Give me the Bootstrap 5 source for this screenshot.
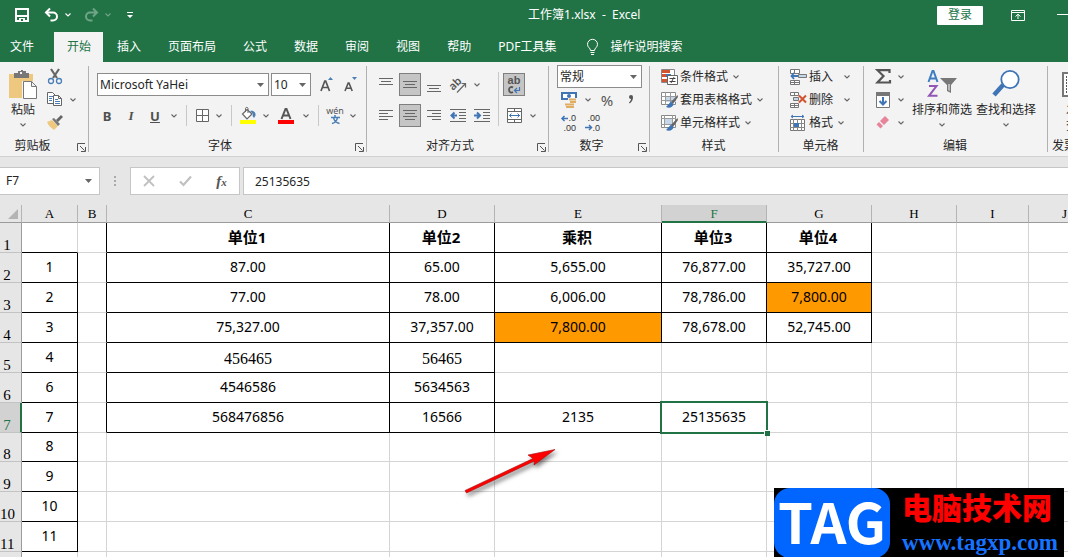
<!DOCTYPE html>
<html lang="zh-CN">
<head>
<meta charset="utf-8">
<meta name="viewport" content="width=device-width, initial-scale=1">
<title>工作簿1.xlsx - Excel</title>
<link href="https://cdn.jsdelivr.net/npm/bootstrap@5.3.0/dist/css/bootstrap.min.css" rel="stylesheet">
<style>
:root{--xl:#217346;--ui:"Noto Sans","Noto Sans CJK SC",sans-serif}
body{font-family:var(--ui);font-size:12px;line-height:16px;color:#262626;background:#fff}
button{font:inherit;color:inherit;background:none;border:0;padding:0}
svg{display:block;flex:none;overflow:visible}
.cv{color:#666}
.titlebar{height:32px;background:var(--xl);color:#fff;padding:0 0 2px 15px}
.titlebar .cv{color:#fff}
.titlebar .quick{flex:6 1 0;gap:3px}
.titlebar .winctl{flex:5 1 0}
.quick button{width:14px;height:16px;display:flex;align-items:center;justify-content:center}
.quick .undo{margin-left:12px}
.quick .wait{opacity:.35}
.quick .redo{margin-left:6px}
.quick .more{margin-left:5px}
.doc-name{white-space:pre}
.login{width:46px;height:19px;background:#fff;color:var(--xl);border-radius:1px}
.tabs{height:30px;background:var(--xl);gap:1px;white-space:nowrap}
.tabs a{color:#fff;text-decoration:none;padding:0 13px;height:30px;display:flex;align-items:center}
.tabs a.first{padding:0 19px 0 10px}
.tabs a.on{background:#f3f3f3;color:var(--xl);padding:0 12px 0 13px}
.ribbon{height:95px;background:#f3f3f3;border-bottom:1px solid #d2d2d2;overflow:hidden}
.grp{flex:none;position:relative;padding-top:3px}
.grp::after{content:"";position:absolute;right:0;top:4px;bottom:4px;width:1px;background:#b1b1b1}
.grp-main{height:69px;display:flex}
.grp-name{height:22px;text-align:center;line-height:24px;padding-right:16px}
.grp-name.mid{padding-right:2px}
.launch{position:absolute;right:3px;bottom:4px;width:9px;height:9px}
.w-clip{width:89px}.w-font{width:278px}.w-align{width:182px}.w-num{width:101px}
.w-style{width:129px}.w-cell{width:85px}.w-edit{width:184px}.w-inv{width:90px}
.w-align .grp-main{padding-left:7px}
.w-style .grp-main,.w-cell .grp-main{padding-left:11px}
.w-inv .grp-main{padding-left:14px}
.tall{display:flex;flex-direction:column;align-items:center;white-space:nowrap}
.tall svg:first-child{margin:4px 0 2px}
.tall .cv{margin-top:5px}
.line{height:23px;display:flex;align-items:center;white-space:nowrap}
.two{padding-top:8px;display:flex;flex-direction:column;gap:8px}
.style-line{padding-left:6px}
.ic{height:23px;width:24px;display:flex;align-items:center;justify-content:center;flex:none}
.ic.s{width:20px}.ic.m{width:22px}.ic.l{width:26px}.ic.c{width:14px}
.ic.down{width:22px;margin:0 1px;background:#c5c5c5;border:1px solid #7f7f7f}
.vsep{width:1px;height:21px;background:#c8c8c8;margin:0 5px;flex:none}
.vsep.long{height:54px;margin:7px 3px 0 4px}
.pick{appearance:none;border:1px solid #8c8c8c;border-radius:0;background:#fff url("data:image/svg+xml,%3Csvg xmlns='http://www.w3.org/2000/svg' width='7' height='4'%3E%3Cpath d='M0 0h7L3.500 4z' fill='%23666'/%3E%3C/svg%3E") no-repeat right 4px center;height:23px;padding:0 2px;color:#262626;font:12px/16px var(--ui)}
.pick.face{width:172px}.pick.size{width:40px;margin-left:2px}.pick.kind{width:85px}
.cmd{display:flex;align-items:center;height:23px;gap:2px}
.cmd .cv{margin-left:3px}
.cmd .cv.far{margin-left:9px}
.glyph{font-weight:700;font-size:13px;color:#505050}
.slant{font-family:"Liberation Serif",serif;font-style:italic}
.pct{font-size:15px;color:#555}
.mini{font:9px "Liberation Sans",sans-serif;fill:#333}
.wrap-ab{font:700 11px "Liberation Sans",sans-serif;fill:#555}
.fx{background:#e6e6e6;height:48px;padding-top:10px}
.fx>*{height:28px}
.fx .pick{width:100px;height:28px;border-color:#c6c6c6;border-left:0;padding-left:6px;background-position:right 7px center}
.dots{width:30px}
.fx-tools{width:110px;background:#fff;border:1px solid #c6c6c6;margin-right:3px;gap:24px}
.fx-fn{font:italic 700 15px/20px "Liberation Serif",serif;color:#555}
.fx-fn span{font-size:11px}
.fx input{border:1px solid #c6c6c6;border-right:0;padding:0 11px;font:12px/16px var(--ui);color:#262626;min-width:0;border-radius:0}
.pane{min-height:0;overflow:hidden;position:relative}
.sheet{table-layout:fixed;width:1101px;border-collapse:separate;border-spacing:0;color:#000;font-size:14px;line-height:18px}
.sheet th,.sheet td{padding:0;text-align:center;vertical-align:middle;overflow:visible}
.sheet td{padding-bottom:2px}
.sheet thead th{height:18px;background:#e6e6e6;border-bottom:1px solid #9b9b9b;border-right:1px solid #b4b4b4;font:13px/16px "Liberation Serif",serif}
.sheet thead th.cur{background:#d2d2d2;border-bottom:2px solid var(--xl);color:var(--xl);line-height:15px}
.sheet tbody th{background:#e6e6e6;border-right:1px solid #9b9b9b;border-bottom:1px solid #c3c3c3;font:15px/13px "Liberation Serif",serif;vertical-align:bottom;padding-right:7px}
.sheet tbody th.cur{background:#d2d2d2;border-right:2px solid var(--xl);color:var(--xl);padding-right:6px}
.sheet tbody tr{height:30px}
.sheet tbody tr.low{height:29px}
.sheet td{border-right:1px solid #d4d4d4;border-bottom:1px solid #d4d4d4}
.sheet .head td{font-weight:700;font-size:15px;padding-right:2px}
.sheet tbody td.hot{background:#f90}
.sheet .seq td:nth-child(2){border-right-color:#000}
.sheet .seq td:nth-child(2),.sheet .head td:nth-child(2),
.sheet .full td:nth-child(n+4):nth-child(-n+8),
.sheet .part td:nth-child(n+4):nth-child(-n+5),.sheet .part td.edge{border-bottom-color:#000}
.sheet .full td:nth-child(n+3):nth-child(-n+8),
.sheet .part td:nth-child(n+3):nth-child(-n+5){border-right-color:#000}
.sheet .song td:nth-child(n+4){font:16px/18px "Liberation Serif",serif;padding:2px 0 0}
.sheet td.sel{position:relative}
.sel::before{content:"";position:absolute;inset:-2px;border:2px solid var(--xl)}
.sel::after{content:"";position:absolute;right:-4px;bottom:-4px;width:6px;height:6px;background:var(--xl);border:solid #fff;border-width:1px 0 0 1px}
.pointer{position:absolute;left:460px;top:240px;filter:drop-shadow(2px 3px 2px rgba(0,0,0,.5))}
.stamp{position:absolute;right:4px;bottom:0;width:290px;height:69px;background:#000;overflow:hidden}
.stamp-tag{width:116px;height:70px;background:#06f;color:#fff;border-radius:16px;font:700 56px/64px "Noto Sans CJK SC",sans-serif;text-align:center;flex:none}
.stamp-name{color:#f00;font:900 30px/36px "Noto Sans CJK SC",sans-serif}
.stamp-url{color:#1673ff;font:700 23px/26px "Liberation Serif",serif;margin-top:6px}
</style>
</head>
<body class="vh-100 d-flex flex-column overflow-hidden">
<svg width="0" height="0" class="position-absolute" aria-hidden="true">
  <defs>
    <symbol id="cv" viewBox="0 0 6 4"><path d="M.5.5 3 3 5.500.5" fill="none" stroke="currentColor" stroke-width="1.100"/></symbol>
    <symbol id="ln" viewBox="0 0 9 9"><path d="M.5 8V.5H8M3 3l4.500 4.500M8.500 4v4.500H4" fill="none" stroke="#555"/></symbol>
  </defs>
</svg>

<header class="titlebar d-flex align-items-center flex-shrink-0">
  <div class="quick d-flex align-items-center">
    <button aria-label="保存"><svg width="14" height="14"><path d="M1 1h12v12H1z" fill="none" stroke="#fff" stroke-width="2"/><path d="M2 7h10v2H2zM4 10h6v4H4z" fill="#fff"/><path d="M6 11h2v2H6z" fill="#217346"/></svg></button>
    <button class="undo" aria-label="撤消"><svg width="15" height="14"><path d="M2 4.500h7a4 4 0 0 1 0 8H6.500" fill="none" stroke="#fff" stroke-width="2"/><path d="M6 .5 2 4.500l4 4" fill="none" stroke="#fff" stroke-width="2"/></svg></button>
    <button aria-label="撤消列表"><svg class="cv" width="6" height="4"><use href="#cv"/></svg></button>
    <button class="wait redo" aria-label="恢复"><svg width="15" height="14"><path d="M13 4.500H6a4 4 0 0 0 0 8h2.500M9 .5l4 4-4 4" fill="none" stroke="#fff" stroke-width="2"/></svg></button>
    <button class="wait" aria-label="恢复列表"><svg class="cv" width="6" height="4"><use href="#cv"/></svg></button>
    <button class="more" aria-label="自定义"><svg width="6" height="6"><path d="M0 0h6v1H0zM0 3h6L3 6z" fill="#fff"/></svg></button>
  </div>
  <span class="doc-name">工作簿1.xlsx  -  Excel</span>
  <div class="winctl d-flex align-items-center justify-content-end">
    <button class="login me-4">登录</button>
    <button class="ms-1" aria-label="功能区显示选项"><svg width="14" height="11"><path d="M.5.5h13v10H.5zM.5 2.500h13M7 9V4.500M4.500 6.500 7 4.200l2.500 2.300" fill="none" stroke="#fff"/></svg></button>
    <button class="ms-4 ps-2" aria-label="最小化"><svg width="11" height="2"><path d="M0 0h11v1H0z" fill="#fff"/></svg></button>
  </div>
</header>

<nav class="tabs d-flex flex-shrink-0">
  <a href="#" class="first">文件</a><a href="#" class="on">开始</a><a href="#">插入</a><a href="#">页面布局</a><a href="#">公式</a><a href="#">数据</a><a href="#">审阅</a><a href="#">视图</a><a href="#">帮助</a><a href="#">PDF工具集</a>
  <a href="#"><svg width="11" height="16" class="me-2 ms-1"><path d="M3.500 11.500C3.500 9 .5 8.500.5 5.300a5 5 0 0 1 10 0c0 3.200-3 3.700-3 6.200zM3.500 13.500h4M4 15.500h3" fill="none" stroke="#fff"/></svg><span class="ps-1">操作说明搜索</span></a>
</nav>

<section class="ribbon d-flex flex-shrink-0">
  <div class="grp w-clip">
    <div class="grp-main ps-2">
      <button class="tall">
        <svg width="30" height="31" viewBox="0 0 30 31"><path d="M1 5h24v24H1z" fill="#edc87e"/><path d="M6 9V4h4V2h3v-1h2v1h3v2h3v5z" fill="#777"/><path d="M12 3h2v2h-2z" fill="#f3f3f3"/><path d="M14 12h10l5 5v13H14z" fill="#f3f3f3"/><path d="M15.500 12.500h8l5 5v12h-13zM23.500 12.500v5h5" fill="#fff" stroke="#777"/></svg>
        粘贴<svg class="cv" width="6" height="4"><use href="#cv"/></svg>
      </button>
      <div class="ms-1 pe-1">
        <div class="line ps-1"><button class="ic s m-0" aria-label="剪切"><svg width="16" height="16"><path d="M3 0l6 9M11 0L5 9" stroke="#666" stroke-width="2.200"/><circle cx="3" cy="12" r="2.500" fill="none" stroke="#4a7fb5" stroke-width="1.300"/><circle cx="11" cy="12" r="2.500" fill="none" stroke="#4a7fb5" stroke-width="1.300"/></svg></button></div>
        <div class="line ps-1"><button class="ic s" aria-label="复制"><svg width="18" height="15"><path d="M.5.5h5l3 3v8h-8z" fill="#fff" stroke="#666"/><path d="M2 4.500h4M2 6.500h3M2 8.500h3" stroke="#4a7fb5"/><path d="M6.500 3.500h5l3 3v7h-8zM11.500 3.500v3h3" fill="#fff" stroke="#666"/><path d="M8 7.500h3M8 9.500h5M8 11.500h5" stroke="#4a7fb5"/></svg></button><button class="ic c" aria-label="复制选项"><svg class="cv" width="6" height="4"><use href="#cv"/></svg></button></div>
        <div class="line ps-1"><button class="ic s" aria-label="格式刷"><svg width="18" height="15"><path d="M0 7l5-2 6 6-4 4C4 13 1 10 0 7z" fill="#edc87e"/><path d="M5 4l2-1 6 6-2 2z" fill="#777"/><path d="M9 5l5-5 2 2-5 5z" fill="#666"/></svg></button></div>
      </div>
    </div>
    <div class="grp-name pe-4">剪贴板</div><button class="launch" aria-label="剪贴板设置"><svg width="9" height="9"><use href="#ln"/></svg></button>
  </div>

  <div class="grp w-font">
    <div class="grp-main">
      <div class="two">
        <div class="line ps-2">
          <select class="pick face" aria-label="字体"><option>Microsoft YaHei</option></select>
          <select class="pick size" aria-label="字号"><option>10</option></select>
          <button class="ic ms-1" aria-label="增大字号"><svg width="14" height="16" viewBox="0 0 14 16"><path d="M1 14 4.800 4h.900L9.500 14M2.500 10.500H8" fill="none" stroke="#555" stroke-width="1.700"/><path d="M8 3h5L10.500 0z" fill="#4a7fb5"/></svg></button>
          <button class="ic" aria-label="减小字号"><svg width="14" height="16" viewBox="0 0 14 16"><path d="M1 14 4.200 6H5l3.200 8M2.300 11.300H7" fill="none" stroke="#555" stroke-width="1.600"/><path d="M8 0h5l-2.500 3z" fill="#4a7fb5"/></svg></button>
        </div>
        <div class="line style-line">
          <button class="ic glyph">B</button><button class="ic glyph slant">I</button><button class="ic glyph text-decoration-underline">U</button><button class="ic c" aria-label="下划线选项"><svg class="cv" width="6" height="4"><use href="#cv"/></svg></button>
          <span class="vsep"></span>
          <button class="ic s" aria-label="边框"><svg width="13" height="13"><path d="M.5.5h12v12H.5zM6.500 0v13M0 6.500h13" fill="#fff" stroke="#666"/></svg></button><button class="ic c" aria-label="边框选项"><svg class="cv" width="6" height="4"><use href="#cv"/></svg></button>
          <span class="vsep"></span>
          <button class="ic m" aria-label="填充颜色"><svg width="16" height="17"><path d="M7 2.500 12 7l-5 5-4.500-5z" fill="#fff" stroke="#666" stroke-width="1.200"/><path d="M5.500 5V1.500c0-1.500 2.500-1.500 2.500 0V6" fill="none" stroke="#666"/><path d="M10 4c4-1 6 2 5.500 4.500L14 11l-1.500-2 .5-2z" fill="#4a7fb5"/><path d="M0 13h16v4H0z" fill="#ff0"/></svg></button><button class="ic c" aria-label="填充选项"><svg class="cv" width="6" height="4"><use href="#cv"/></svg></button>
          <button class="ic l" aria-label="字体颜色"><svg width="16" height="16"><path d="M3.500 11 7.500 1h1l4 10M5 7.500h6" fill="none" stroke="#555" stroke-width="2"/><path d="M0 12h16v4H0z" fill="red"/></svg></button><button class="ic c" aria-label="颜色选项"><svg class="cv" width="6" height="4"><use href="#cv"/></svg></button>
          <span class="vsep"></span>
          <button class="ic m" aria-label="拼音"><svg width="17" height="17"><text x="8" y="7" text-anchor="middle" font-size="9" font-family="Noto Sans" fill="#555">wén</text><path d="M8 8v2M4 10.500h9M5 16.500c4-1 5-3 5.500-6M12.500 16.500c-4-1-5.500-3-6-6" fill="none" stroke="#4a7fb5" stroke-width="1.500"/></svg></button><button class="ic c" aria-label="拼音选项"><svg class="cv" width="6" height="4"><use href="#cv"/></svg></button>
        </div>
      </div>
    </div>
    <div class="grp-name">字体</div><button class="launch" aria-label="字体设置"><svg width="9" height="9"><use href="#ln"/></svg></button>
  </div>

  <div class="grp w-align">
    <div class="grp-main">
      <div class="two">
        <div class="line">
          <button class="ic" aria-label="顶端对齐"><svg width="14" height="16"><path d="M0 1.500h14M2 4.500h10M0 7.500h14" stroke="#666"/></svg></button><button class="ic down" aria-label="垂直居中"><svg width="14" height="16"><path d="M0 4.500h14M2 7.500h10M0 10.500h14" stroke="#666"/></svg></button><button class="ic" aria-label="底端对齐"><svg width="14" height="16"><path d="M0 8.500h14M2 11.500h10M0 14.500h14" stroke="#666"/></svg></button><button class="ic" aria-label="方向"><svg width="17" height="16"><text x="0" y="11" font-size="11" font-weight="600" font-family="Noto Sans" fill="#555" transform="rotate(-45 5 9)">ab</text><path d="M7 15.500 15 7M11.500 6.500h4v4" fill="none" stroke="#666" stroke-width="1.200"/></svg></button><button class="ic c" aria-label="方向选项"><svg class="cv" width="6" height="4"><use href="#cv"/></svg></button>
        </div>
        <div class="line">
          <button class="ic" aria-label="左对齐"><svg width="14" height="12"><path d="M0 .5h14M0 3.500h9M0 6.500h14M0 9.500h9" stroke="#666"/></svg></button><button class="ic down" aria-label="居中"><svg width="14" height="12"><path d="M0 .5h14M2 3.500h10M0 6.500h14M2 9.500h10" stroke="#666"/></svg></button><button class="ic" aria-label="右对齐"><svg width="14" height="12"><path d="M0 .5h14M5 3.500h9M0 6.500h14M5 9.500h9" stroke="#666"/></svg></button><button class="ic" aria-label="减少缩进"><svg width="16" height="13"><path d="M0 .5h16M9 3.500h7M9 6.500h7M9 9.500h7M0 12.500h16" stroke="#666"/><path d="M7 6.500H2M4.500 3.500l-3 3 3 3" fill="none" stroke="#3f74b5" stroke-width="2"/></svg></button><button class="ic" aria-label="增加缩进"><svg width="16" height="13"><path d="M0 .5h16M9 3.500h7M9 6.500h7M9 9.500h7M0 12.500h16" stroke="#666"/><path d="M0 6.500h5M3 3.500l3 3-3 3" fill="none" stroke="#3f74b5" stroke-width="2"/></svg></button>
        </div>
      </div>
      <span class="vsep long"></span>
      <div class="two">
        <div class="line"><button class="ic down" aria-label="自动换行"><svg width="16" height="20"><text class="wrap-ab" x="8" y="9" text-anchor="middle">ab</text><path d="M7 12.500c-1.500-1-4-.5-4 2.300s2.500 3.300 4 2.300" fill="none" stroke="#555" stroke-width="1.800"/><path d="M13.500 12v3.500H9M11 13l-2.500 2.500L11 18" fill="none" stroke="#3f74b5" stroke-width="1.200"/></svg></button></div>
        <div class="line"><button class="ic" aria-label="合并后居中"><svg width="15" height="15"><path d="M.5.5h14v14H.5z" fill="#fff" stroke="#666"/><path d="M0 3.500h15M0 11.500h15M7.500 0v3.500M7.500 12v3" stroke="#666"/><path d="M2 7.500h11M4.500 5.500l-2 2 2 2M10.500 5.500l2 2-2 2" fill="none" stroke="#3f74b5"/></svg></button><button class="ic c" aria-label="合并选项"><svg class="cv" width="6" height="4"><use href="#cv"/></svg></button></div>
      </div>
    </div>
    <div class="grp-name">对齐方式</div><button class="launch" aria-label="对齐设置"><svg width="9" height="9"><use href="#ln"/></svg></button>
  </div>

  <div class="grp w-num">
    <div class="grp-main flex-column ps-2">
      <select class="pick kind" aria-label="数字格式"><option>常规</option></select>
      <div class="line"><button class="ic" aria-label="会计格式"><svg width="17" height="17"><path d="M1 2h14v6H1z" fill="#fff" stroke="#3f74b5" stroke-width="2"/><circle cx="8" cy="5" r="2" fill="#3f74b5"/><path d="M7 7h9v9H7z" fill="#f3f3f3"/><path d="M8 8.500h7M9 11h6M4 13.500h9M5 16h8" stroke="#e0ae62" stroke-width="1.800"/></svg></button><button class="ic c" aria-label="会计选项"><svg class="cv" width="6" height="4"><use href="#cv"/></svg></button><button class="ic pct">%</button><button class="ic" aria-label="千位分隔"><svg width="6" height="9"><path d="M1 2a2 2 0 0 1 4 0c0 3-1 5-3.500 6.500l-.5-1C2.500 6 3 5 3 4 2 4 1 3 1 2z" fill="#555"/></svg></button></div>
      <div class="line"><button class="ic" aria-label="增加小数位"><svg width="16" height="15"><text class="mini" x="15" y="6" text-anchor="end">.0</text><text class="mini" x="15" y="16" text-anchor="end">.00</text><path d="M7 3.500H1M3.500 1 1 3.500 3.500 6" fill="none" stroke="#3f74b5" stroke-width="1.500"/></svg></button><button class="ic" aria-label="减少小数位"><svg width="16" height="15"><text class="mini" x="15" y="6" text-anchor="end">.00</text><text class="mini" x="15" y="16" text-anchor="end">.0</text><path d="M0 12.500h6M4 10l2.500 2.500L4 15" fill="none" stroke="#3f74b5" stroke-width="1.500"/></svg></button></div>
    </div>
    <div class="grp-name">数字</div><button class="launch" aria-label="数字设置"><svg width="9" height="9"><use href="#ln"/></svg></button>
  </div>

  <div class="grp w-style">
    <div class="grp-main flex-column">
      <button class="cmd"><svg width="17" height="16"><path d="M.5.5h13v13H.5z" fill="#fff" stroke="#888"/><path d="M1 1h8v3H1zM1 10h5v3H1z" fill="#d35230"/><path d="M1 5h4v3H1z" fill="#d35230"/><path d="M5 5h5v3H5z" fill="#3f74b5"/><path d="M6.500 6.500h10v9h-10z" fill="#fff" stroke="#666"/><path d="M8.500 9.500h6M8.500 12.500h6M13 8l-3 6" stroke="#444"/></svg>条件格式<svg class="cv" width="6" height="4"><use href="#cv"/></svg></button>
      <button class="cmd"><svg width="17" height="16"><path d="M.5.5h14v12H.5z" fill="#fff" stroke="#888"/><path d="M5 4h10v6H5z" fill="#c7d7ea"/><path d="M0 4.500h15M0 8.500h15M4.500 0v13M9.500 0v13" stroke="#999"/><path d="M16.500 3 10 10l2 2 5-7z" fill="#666"/><path d="M10 9.500 5 15c3 1.500 7 .5 7.500-3z" fill="#3f74b5"/></svg>套用表格格式<svg class="cv" width="6" height="4"><use href="#cv"/></svg></button>
      <button class="cmd"><svg width="17" height="16"><path d="M.5.5h14v12H.5z" fill="#fff" stroke="#888"/><path d="M3 3h9v7H3z" fill="#c7d7ea"/><path d="M0 3.500h15M0 9.500h15M3.500 0v13M11.500 0v13" stroke="#999"/><path d="M16.500 3 10 10l2 2 5-7z" fill="#666"/><path d="M10 9.500 5 15c3 1.500 7 .5 7.500-3z" fill="#3f74b5"/></svg>单元格样式<svg class="cv" width="6" height="4"><use href="#cv"/></svg></button>
    </div>
    <div class="grp-name mid">样式</div>
  </div>

  <div class="grp w-cell">
    <div class="grp-main flex-column">
      <button class="cmd"><svg width="17" height="16"><path d="M.5.5h9v4h-9zM4.500.5v4M.5 11.500h9v4h-9zM4.500 11.500v4M.5 13.500h9" fill="#fff" stroke="#777"/><path d="M8.500 5.500h8v3h-8z" fill="#c7d7ea" stroke="#777"/><path d="M8 7H1.500M4 4 1.500 7 4 10" fill="none" stroke="#3f74b5" stroke-width="1.800"/></svg>插入<svg class="cv far" width="6" height="4"><use href="#cv"/></svg></button>
      <button class="cmd"><svg width="17" height="16"><path d="M.5.5h8v3h-8zM4.500.5v3M.5 11.500h8v4h-8zM4.500 11.500v4M.5 13.500h8" fill="#fff" stroke="#777"/><path d="M3.500 5.500h5v3h-5z" fill="#c7d7ea" stroke="#777"/><path d="M9 3.500l7 7M16 3.500l-7 7" stroke="#d35230" stroke-width="2"/></svg>删除<svg class="cv far" width="6" height="4"><use href="#cv"/></svg></button>
      <button class="cmd"><svg width="17" height="16"><path d="M1 1.500h13M3 0 1 1.500 3 3M12 0l2 1.500L12 3" fill="none" stroke="#3f74b5"/><path d="M.5 4.500h14v11H.5z" fill="#fff" stroke="#777"/><path d="M0 8.500h15M0 12.500h15M3.500 4v12M7.500 4v12M11.500 4v12" stroke="#888"/><path d="M4 8h5v4H4z" fill="#3f74b5"/></svg>格式<svg class="cv" width="6" height="4"><use href="#cv"/></svg></button>
    </div>
    <div class="grp-name mid">单元格</div>
  </div>

  <div class="grp w-edit">
    <div class="grp-main ps-2">
      <div class="me-1">
        <div class="line"><button class="ic m" aria-label="求和"><svg width="16" height="15"><path d="M14.500 4V1.200H2.500L8.500 7l-6 6.500h12.500V11" fill="none" stroke="#555" stroke-width="2.200"/></svg></button><button class="ic c" aria-label="求和选项"><svg class="cv" width="6" height="4"><use href="#cv"/></svg></button></div>
        <div class="line"><button class="ic m" aria-label="填充"><svg width="14" height="16"><path d="M.5.5h13v15H.5z" fill="#fff" stroke="#777"/><path d="M0 0h14v4H0z" fill="#777"/><path d="M7 5v7M3.500 9 7 12.500 10.500 9" fill="none" stroke="#3f74b5" stroke-width="2"/></svg></button><button class="ic c" aria-label="填充选项"><svg class="cv" width="6" height="4"><use href="#cv"/></svg></button></div>
        <div class="line"><button class="ic m" aria-label="清除"><svg width="14" height="13"><path d="M9 0l4 4-5 5-4-4z" fill="#e8849a"/><path d="M3 6l4 4-2.500 2.500L.5 8.500z" fill="#e8849a"/></svg></button><button class="ic c" aria-label="清除选项"><svg class="cv" width="6" height="4"><use href="#cv"/></svg></button></div>
      </div>
      <button class="tall"><svg width="30" height="31" viewBox="0 0 30 31"><path d="M1.500 13 5.500 2h1l4 11M3 9.500h6" fill="none" stroke="#3f7ec1" stroke-width="2"/><path d="M2 17h7.500L2 26.800h8.500" fill="none" stroke="#9256b5" stroke-width="2"/><path d="M13 9h17l-6 7v8l-4-2v-6z" fill="#777"/><path d="M21.500 15h1v7l-1-1z" fill="#fff"/></svg>排序和筛选<svg class="cv" width="6" height="4"><use href="#cv"/></svg></button>
      <button class="tall ms-1"><svg width="28" height="31" viewBox="0 0 28 31"><path d="M11 16 2 26" stroke="#3f74b5" stroke-width="4.500"/><circle cx="18" cy="10.500" r="8.700" fill="#fff" stroke="#3f74b5" stroke-width="1.800"/></svg>查找和选择<svg class="cv" width="6" height="4"><use href="#cv"/></svg></button>
    </div>
    <div class="grp-name mid">编辑</div>
  </div>

  <div class="grp w-inv">
    <div class="grp-main">
      <button class="tall align-items-start"><svg width="30" height="31"><path d="M1 4h28v23H1z" fill="#fff" stroke="#777" stroke-width="2"/><path d="M4.500 7v18" stroke="#555" stroke-dasharray="2 1"/></svg><span class="ps-1">发票</span><span class="ps-1">查验</span></button>
    </div>
    <div class="grp-name text-start ps-1">发票查验</div>
  </div>
</section>

<div class="fx d-flex flex-shrink-0">
  <select class="pick" aria-label="名称框"><option>F7</option></select>
  <span class="dots d-flex align-items-center justify-content-center"><svg width="2" height="10"><path d="M0 0h2v2H0zM0 4h2v2H0zM0 8h2v2H0z" fill="#aaa"/></svg></span>
  <div class="fx-tools d-flex align-items-center justify-content-center">
    <button aria-label="取消"><svg width="12" height="12"><path d="M1 1l10 10M11 1 1 11" stroke="#c0c0c0" stroke-width="1.800"/></svg></button>
    <button aria-label="输入"><svg width="13" height="12"><path d="M1 6.500 4.500 10 12 1.500" fill="none" stroke="#c0c0c0" stroke-width="2.200"/></svg></button>
    <button aria-label="插入函数" class="fx-fn">f<span>x</span></button>
  </div>
  <input class="flex-fill" value="25135635" aria-label="编辑栏">
</div>

<main class="pane flex-fill">
  <table class="sheet">
    <colgroup><col style="width:22px"><col style="width:56px"><col style="width:29px"><col style="width:283px"><col style="width:105px"><col style="width:167px"><col style="width:105px"><col style="width:105px"><col style="width:85px"><col style="width:72px"><col style="width:72px"></colgroup>
    <thead><tr><th aria-label="全选"><svg width="10" height="10" class="ms-2"><path d="M10 0v10H0z" fill="#b4b4b4"/></svg></th><th>A</th><th>B</th><th>C</th><th>D</th><th>E</th><th class="cur">F</th><th>G</th><th>H</th><th>I</th><th>J</th></tr></thead>
    <tbody>
      <tr class="head full"><th>1</th><td></td><td></td><td>单位1</td><td>单位2</td><td>乘积</td><td>单位3</td><td>单位4</td><td></td><td></td><td></td></tr>
      <tr class="seq full"><th>2</th><td>1</td><td></td><td>87.00</td><td>65.00</td><td>5,655.00</td><td>76,877.00</td><td>35,727.00</td><td></td><td></td><td></td></tr>
      <tr class="seq full"><th>3</th><td>2</td><td></td><td>77.00</td><td>78.00</td><td>6,006.00</td><td>78,786.00</td><td class="hot">7,800.00</td><td></td><td></td><td></td></tr>
      <tr class="seq full"><th>4</th><td>3</td><td></td><td>75,327.00</td><td>37,357.00</td><td class="hot">7,800.00</td><td>78,678.00</td><td>52,745.00</td><td></td><td></td><td></td></tr>
      <tr class="seq part song"><th>5</th><td>4</td><td></td><td>456465</td><td>56465</td><td></td><td></td><td></td><td></td><td></td><td></td></tr>
      <tr class="seq part"><th>6</th><td>6</td><td></td><td>4546586</td><td>5634563</td><td class="edge"></td><td></td><td></td><td></td><td></td><td></td></tr>
      <tr class="seq part"><th class="cur">7</th><td>7</td><td></td><td>568476856</td><td>16566</td><td class="edge">2135</td><td class="sel">25135635</td><td></td><td></td><td></td><td></td></tr>
      <tr class="seq low"><th>8</th><td>8</td><td></td><td></td><td></td><td></td><td></td><td></td><td></td><td></td><td></td></tr>
      <tr class="seq"><th>9</th><td>9</td><td></td><td></td><td></td><td></td><td></td><td></td><td></td><td></td><td></td></tr>
      <tr class="seq"><th>10</th><td>10</td><td></td><td></td><td></td><td></td><td></td><td></td><td></td><td></td><td></td></tr>
      <tr class="seq"><th>11</th><td>11</td><td></td><td></td><td></td><td></td><td></td><td></td><td></td><td></td><td></td></tr>
      <tr><th></th><td></td><td></td><td></td><td></td><td></td><td></td><td></td><td></td><td></td><td></td></tr>
    </tbody>
  </table>
  <svg class="pointer" width="104" height="58" viewBox="0 0 104 58"><path d="M5 45.500 73 13.500 68 10 95 4.500 74 20 74.500 16 6.500 48z" fill="#f00" stroke="#a01010" stroke-width=".6"/></svg>
  <div class="stamp d-flex">
    <div class="stamp-tag">TAG</div>
    <div class="ps-2 ms-1 text-nowrap"><div class="stamp-name">电脑技术网</div><div class="stamp-url">www.tagxp.com</div></div>
  </div>
</main>
<script src="https://cdn.jsdelivr.net/npm/bootstrap@5.3.0/dist/js/bootstrap.bundle.min.js"></script>
</body>
</html>
